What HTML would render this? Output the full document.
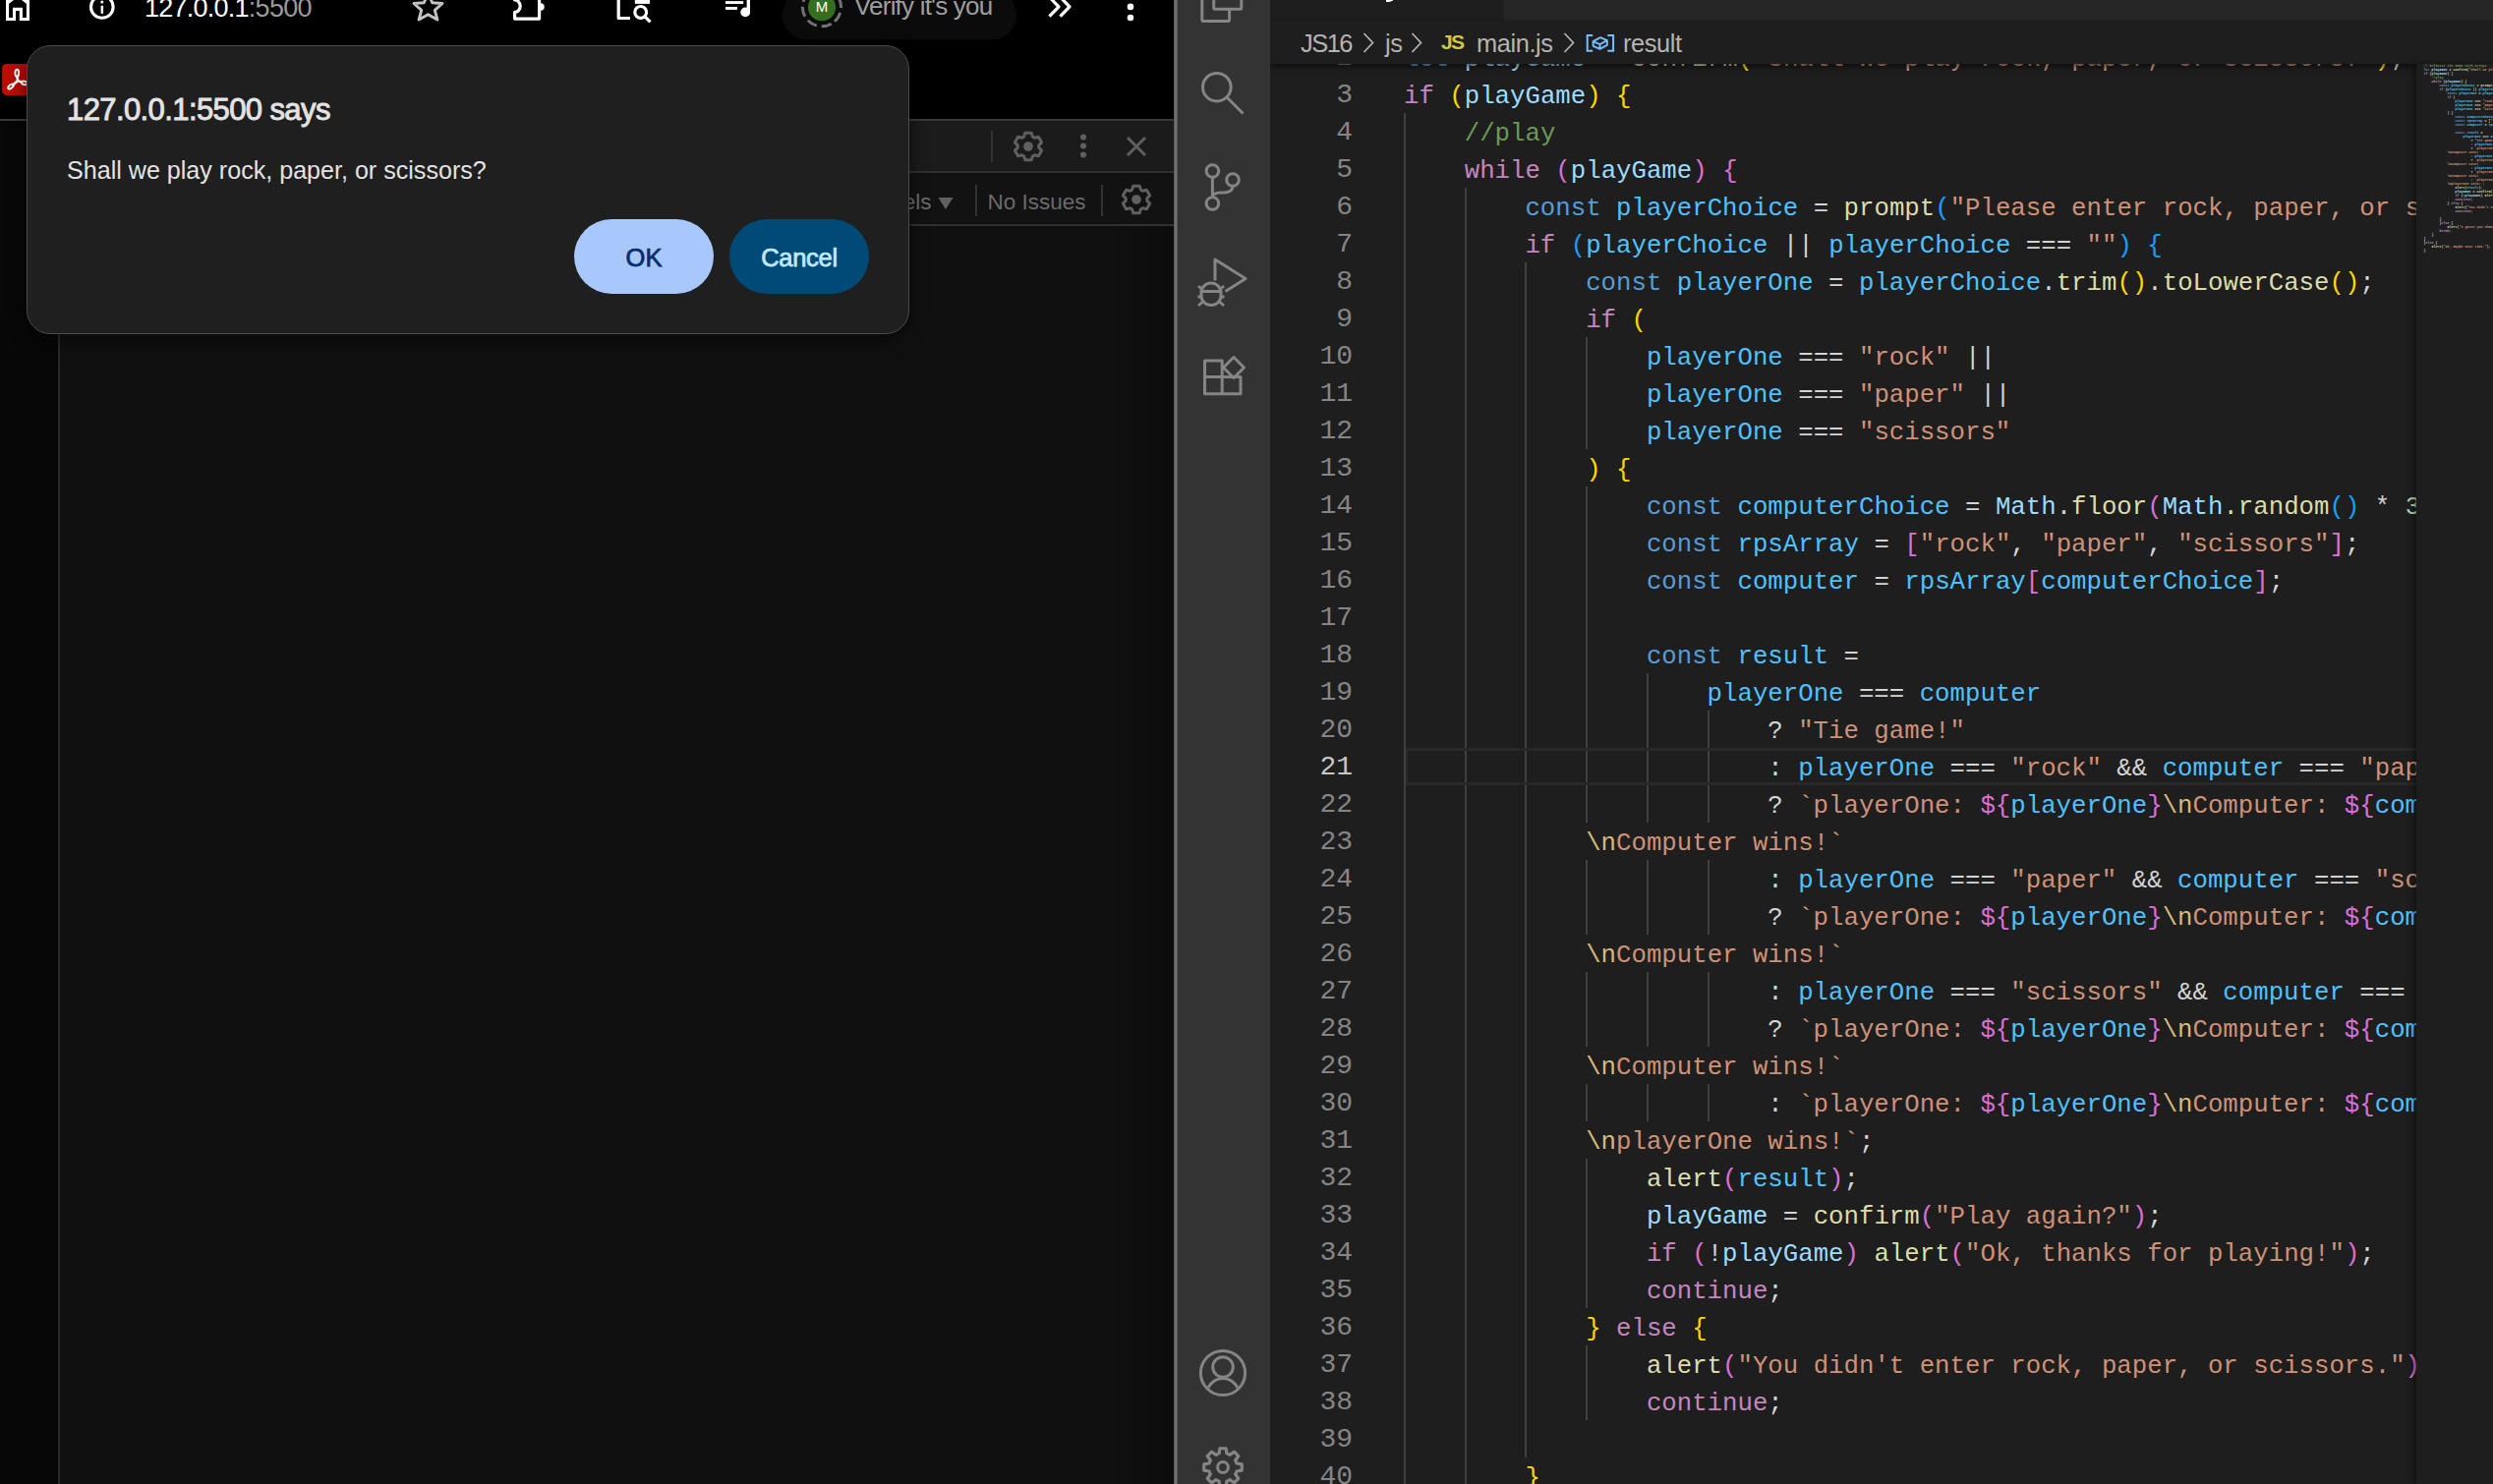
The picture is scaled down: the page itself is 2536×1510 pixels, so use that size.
<!DOCTYPE html>
<html><head><meta charset="utf-8">
<style>
*{margin:0;padding:0;box-sizing:border-box}
html,body{width:2536px;height:1510px;overflow:hidden;background:#000;font-family:"Liberation Sans",sans-serif}
.a{position:absolute}
/* browser */
#browser{position:absolute;left:0;top:0;width:1194px;height:1510px;background:#070707;overflow:hidden}
#toolbar{position:absolute;left:0;top:0;width:1194px;height:121px;background:#000}
#tbline{position:absolute;left:0;top:121px;width:1194px;height:2px;background:#3a3a3a}
#devtools{position:absolute;left:58.5px;top:123px;width:1135.5px;height:1387px;background:#101010;border-left:2px solid #2a2a2a}
#dt1{position:absolute;left:0;top:0;width:100%;height:53px;background:#1b1b1b;border-bottom:2px solid #303030}
#dt2{position:absolute;left:0;top:55px;width:100%;height:52px;background:#121212;border-bottom:2px solid #303030}
.sep{position:absolute;width:2px;background:#333}
#url{position:absolute;left:147px;top:-7px;font-size:27px;color:#fff;white-space:nowrap;letter-spacing:-0.75px}
#url span{color:#9a9a9a}
#pill{position:absolute;left:796px;top:-10px;width:238px;height:50px;border-radius:25px;background:#0c0c0c}
#verify{position:absolute;left:869px;top:-9px;font-size:26px;color:#9e9e9e;white-space:nowrap;letter-spacing:-0.8px}
/* dialog */
#dialog{position:absolute;left:27px;top:46px;width:898px;height:294px;background:#1f1f1f;border:1.5px solid #4a4a4a;border-radius:24px;box-shadow:0 6px 18px rgba(0,0,0,0.5)}
#dtitle{position:absolute;left:40px;top:47px;font-size:31px;font-weight:normal;color:#e3e3e3;white-space:nowrap;letter-spacing:-0.6px;-webkit-text-stroke:0.9px #e3e3e3}
#dbody{position:absolute;left:40px;top:112px;font-size:25.1px;color:#e3e3e3;white-space:nowrap}
.btn{position:absolute;top:176px;width:142px;height:76px;border-radius:38px;font-size:25.5px;font-weight:normal;text-align:center;line-height:79px;-webkit-text-stroke:0.75px currentColor}
#ok{left:556px;background:#a8c7fa;color:#062e6f}
#cancel{left:714px;background:#004a77;color:#c2e7ff;letter-spacing:-0.3px}
/* vscode */
#vborder{position:absolute;left:1194px;top:0;width:4px;height:1510px;background:linear-gradient(to right,#505050,#767676 45%,#6a6a6a 75%,#4a4a4a)}
#activity{position:absolute;left:1198px;top:0;width:94px;height:1510px;background:#333333}
#editor{position:absolute;left:1292px;top:0;width:1244px;height:1510px;background:#1e1e1e;overflow:hidden}
#tabs{position:absolute;left:0;top:0;width:1244px;height:21px;background:#262626}
#acttab{position:absolute;left:0;top:0;width:238px;height:21px;background:#1e1e1e}
#crumbs{position:absolute;left:0;top:21px;width:1244px;height:44px;background:#1e1e1e;z-index:5;box-shadow:0 3px 6px rgba(0,0,0,0.55)}
#crumbs .t{position:absolute;top:8.5px;font-size:25.4px;color:#b4b4b4;white-space:nowrap;letter-spacing:-0.4px}
#code{position:absolute;left:0;top:0;width:2458px;height:1510px;overflow:hidden}
.cl{position:absolute;white-space:pre;font-family:"Liberation Mono",monospace;font-size:25.72px;line-height:38px;height:38px}
.ln{position:absolute;left:1200px;width:176px;text-align:right;font-family:"Liberation Mono",monospace;font-size:28px;line-height:38px;color:#858585}
.ln.act{color:#c6c6c6}
.g{position:absolute;width:2px;background:#404040}
.cur{position:absolute;left:1430px;width:1028px;height:38px;border-top:3.5px solid #282828;border-bottom:3.5px solid #282828;border-left:2px solid #282828}
.kw{color:#c586c0}.st{color:#569cd6}.v{color:#9cdcfe}.c{color:#4fc1ff}.f{color:#dcdcaa}.s{color:#ce9178}
.e{color:#d7ba7d}.cm{color:#6a9955}.o{color:#d4d4d4}.n{color:#b5cea8}.b1{color:#ffd700}.b2{color:#da70d6}.b3{color:#179fff}
#mmwrap{position:absolute;z-index:6;left:2458px;top:65px;width:78px;height:1445px;background:#1e1e1e;box-shadow:-2px 0 6px rgba(0,0,0,0.5)}
.mml{position:absolute;white-space:pre;font-family:"Liberation Mono",monospace;font-size:3.34px;line-height:4px;font-weight:bold;transform:scaleY(1.25);transform-origin:0 2px}
</style></head><body>
<div id="browser">
  <div id="toolbar">
    <svg class="a" style="left:0;top:0" width="1194" height="50" viewBox="0 0 1194 50">
      <g fill="none" stroke="#fff" stroke-width="3.1" stroke-linejoin="miter">
        <path d="M7.55 -3 V19.55 H14.5 V9.35 H21.35 V19.55 H28.45 V-3"/>
        <path d="M7.55 3 L18 -5 L28.45 3"/>
        <circle cx="103.8" cy="7" r="11.3"/>
      </g>
      <rect x="102.6" y="5.8" width="2.5" height="8" fill="#fff"/>
      <circle cx="103.8" cy="1.9" r="1.5" fill="#fff"/>
      <path d="M435.5 -7.3 L439.7 2.8 L450 3.5 L442.3 10.3 L444.9 20 L435.5 14.8 L426.1 20 L428.7 10.3 L421 3.5 L431.3 2.8 Z" fill="none" stroke="#c4c4c4" stroke-width="2.9" stroke-linejoin="round"/>
      <g fill="none" stroke="#fff" stroke-width="3.2" stroke-linejoin="round">
        <path d="M523.6 -2 V0 A5.6 6.2 0 0 1 523.6 12.4 V19.1 H548.6 V-2"/>
        <path d="M629.2 -2 V18.5 H641"/>
        <circle cx="651.7" cy="12.4" r="5.9"/>
        <path d="M656 16.8 L661.5 22.3"/>
        <path d="M1067.5 -3 L1077 6.8 L1067.5 16.6 M1078.5 -3 L1088 6.8 L1078.5 16.6"/>
      </g>
      <path d="M550 3.3 A3.75 3.75 0 0 1 550 10.8 Z" fill="#fff"/>
      <rect x="645.8" y="-2" width="15.2" height="5.9" fill="#fff"/>
      <rect x="738" y="1.1" width="18.2" height="2.9" fill="#fff"/>
      <rect x="738" y="7" width="12" height="2.9" fill="#fff"/>
      <rect x="759.6" y="-2" width="3.4" height="14.4" fill="#fff"/>
      <circle cx="758.2" cy="12.4" r="4.9" fill="#fff"/>
      <rect x="796" y="-10" width="238" height="50.4" rx="25" fill="#0b0b0b"/>
      <circle cx="836" cy="7.2" r="19.6" fill="none" stroke="#727272" stroke-width="3" stroke-dasharray="10.5 4.9" transform="rotate(60 836 7.2)"/>
      <circle cx="836" cy="7.2" r="14.1" fill="#346e21"/>
      <text x="836" y="12.4" font-size="15" fill="#fff" text-anchor="middle" font-family="Liberation Sans">M</text>
      <circle cx="1150" cy="6.9" r="3.3" fill="#fff"/>
      <circle cx="1150" cy="18" r="3.3" fill="#fff"/>
    </svg>
    <div id="url">127.0.0.1<span>:5500</span></div>
    <div id="verify">Verify it's you</div>
    <!-- pdf -->
    <svg class="a" style="left:0;top:60px" width="40" height="42" viewBox="0 60 40 42">
      <defs><linearGradient id="pg" x1="0" x2="1" y1="0" y2="0"><stop offset="0" stop-color="#c00d00"/><stop offset="1" stop-color="#a80a00"/></linearGradient></defs>
      <rect x="2.2" y="64.9" width="40" height="32" rx="4.5" fill="url(#pg)"/>
      <g fill="none" stroke="#fff" stroke-width="1.9">
        <ellipse cx="17.3" cy="74.3" rx="1.9" ry="3.6"/>
        <ellipse cx="11" cy="88" rx="3.3" ry="1.7" transform="rotate(-40 11 88)"/>
        <ellipse cx="24.8" cy="84.4" rx="3" ry="1.7" transform="rotate(15 24.8 84.4)"/>
      </g>
      <path d="M17.4 77.5 L18 82.3 L13.3 86.3 M18 82.3 L22.2 83.6" fill="none" stroke="#fff" stroke-width="2.6" stroke-linecap="round"/>
    </svg>
  </div>
  <div id="tbline"></div>
  <div id="devtools">
    <div id="dt1">
      <div class="sep" style="left:947px;top:10px;height:32px"></div>
      <svg class="a" style="left:968px;top:9px" width="34" height="34" viewBox="0 0 34 34"><path d="M12.61 7.13 L13.81 3.16 L20.19 3.16 L21.39 7.13 L21.90 7.38 L22.40 7.65 L22.88 7.94 L23.35 8.26 L27.39 7.32 L30.58 12.85 L27.74 15.87 L27.79 16.43 L27.80 17.00 L27.79 17.57 L27.74 18.13 L30.58 21.15 L27.39 26.68 L23.35 25.74 L22.88 26.06 L22.40 26.35 L21.90 26.62 L21.39 26.87 L20.19 30.84 L13.81 30.84 L12.61 26.87 L12.10 26.62 L11.60 26.35 L11.12 26.06 L10.65 25.74 L6.61 26.68 L3.42 21.15 L6.26 18.13 L6.21 17.57 L6.20 17.00 L6.21 16.43 L6.26 15.87 L3.42 12.85 L6.61 7.32 L10.65 8.26 L11.12 7.94 L11.60 7.65 L12.10 7.38 Z" fill="none" stroke="#606060" stroke-width="3" stroke-linejoin="round"/><circle cx="17" cy="17" r="4.8" fill="#606060"/></svg>
      <svg class="a" style="left:1033px;top:11px" width="16" height="30" viewBox="0 0 16 30"><circle cx="8" cy="5.5" r="3" fill="#606060"/><circle cx="8" cy="14.5" r="3" fill="#606060"/><circle cx="8" cy="23.5" r="3" fill="#606060"/></svg>
      <svg class="a" style="left:1083px;top:14px" width="24" height="24" viewBox="0 0 24 24"><path d="M3 3 L21 21 M21 3 L3 21" stroke="#606060" stroke-width="3"/></svg>
    </div>
    <div id="dt2">
      <div class="a" style="left:822px;top:14.5px;font-size:22.5px;color:#6a6a6a;white-space:nowrap">Levels</div>
      <svg class="a" style="left:892px;top:22px" width="18" height="14" viewBox="0 0 18 14"><path d="M1.5 1 H16.5 L9 13 Z" fill="#606060"/></svg>
      <div class="sep" style="left:931px;top:10px;height:32px"></div>
      <div class="a" style="left:944px;top:14.5px;font-size:22.5px;color:#6a6a6a;white-space:nowrap">No Issues</div>
      <div class="sep" style="left:1059px;top:10px;height:32px"></div>
      <svg class="a" style="left:1078px;top:8px" width="34" height="34" viewBox="0 0 34 34"><path d="M12.61 7.13 L13.81 3.16 L20.19 3.16 L21.39 7.13 L21.90 7.38 L22.40 7.65 L22.88 7.94 L23.35 8.26 L27.39 7.32 L30.58 12.85 L27.74 15.87 L27.79 16.43 L27.80 17.00 L27.79 17.57 L27.74 18.13 L30.58 21.15 L27.39 26.68 L23.35 25.74 L22.88 26.06 L22.40 26.35 L21.90 26.62 L21.39 26.87 L20.19 30.84 L13.81 30.84 L12.61 26.87 L12.10 26.62 L11.60 26.35 L11.12 26.06 L10.65 25.74 L6.61 26.68 L3.42 21.15 L6.26 18.13 L6.21 17.57 L6.20 17.00 L6.21 16.43 L6.26 15.87 L3.42 12.85 L6.61 7.32 L10.65 8.26 L11.12 7.94 L11.60 7.65 L12.10 7.38 Z" fill="none" stroke="#606060" stroke-width="3" stroke-linejoin="round"/><circle cx="17" cy="17" r="4.8" fill="#606060"/></svg>
    </div>
  </div>
  <div class="a" style="left:1130px;top:231px;width:64px;height:1279px;background:linear-gradient(to right,rgba(0,0,0,0),rgba(0,0,0,0.28))"></div>
  <div id="dialog">
    <div id="dtitle">127.0.0.1:5500 says</div>
    <div id="dbody">Shall we play rock, paper, or scissors?</div>
    <div class="btn" id="ok">OK</div>
    <div class="btn" id="cancel">Cancel</div>
  </div>
</div>
<div id="vborder"></div>
<div id="activity">
  <svg class="a" style="left:0;top:0" width="94" height="1510" viewBox="0 0 94 1510">
    <g fill="none" stroke="#858585" stroke-width="3" stroke-linejoin="round">
      <!-- explorer -->
      <path d="M24.8 -20 V20 Q24.8 21.6 26.4 21.6 H51 Q52.6 21.6 52.6 20 V9.3"/>
      <path d="M36.7 -20 V7.7 Q36.7 9.3 38.3 9.3 H63.2 Q64.8 9.3 64.8 7.7 V-20"/>
      <!-- search -->
      <circle cx="39.8" cy="88.7" r="14.3"/>
      <path d="M50 99 L66.5 115.5"/>
      <!-- scm -->
      <circle cx="35.4" cy="174" r="6.3"/>
      <circle cx="35.4" cy="207" r="6.3"/>
      <circle cx="56" cy="183" r="6.3"/>
      <path d="M35.4 180.3 V200.7"/>
      <path d="M56 189.3 C56 194.5 52 196 46 196 H43 C38.5 196 35.4 198 35.4 201"/>
      <!-- debug -->
      <path d="M38 285.5 V264 L69 283.5 L48.5 296.5"/>
      <path d="M24 298 A10 10 0 0 1 44 298 V301 A10 9.5 0 0 1 24 301 Z"/>
      <path d="M24 296.5 H44 M20.5 302 H24 M44 302 H47.5 M21 291 L25.5 295 M47 291 L42.5 295 M21 311 L25.5 307 M47 311 L42.5 307"/>
      <!-- extensions -->
      <path d="M27.5 383.4 V367 H45.2 V400.8 H27.5 V383.4 H64 V400.8 H45.2"/>
      <path d="M57 363.5 L67.5 374 L57 384.5 L46.5 374 Z"/>
      <!-- account -->
      <circle cx="46" cy="1397" r="22.6"/>
      <circle cx="46" cy="1391" r="10.3"/>
      <path d="M31 1412 C34.5 1406 40 1402.5 46 1402.5 C52 1402.5 57.5 1406 61 1412"/>
      <!-- gear -->
      <circle cx="46" cy="1493" r="5.4"/>
      <path d="M42.00 1479.06 L42.95 1473.74 L49.05 1473.74 L50.00 1479.06 L50.78 1479.31 L51.55 1479.60 L52.30 1479.94 L53.03 1480.32 L57.46 1477.22 L61.78 1481.54 L58.68 1485.97 L59.06 1486.70 L59.40 1487.45 L59.69 1488.22 L59.94 1489.00 L65.26 1489.95 L65.26 1496.05 L59.94 1497.00 L59.69 1497.78 L59.40 1498.55 L59.06 1499.30 L58.68 1500.03 L61.78 1504.46 L57.46 1508.78 L53.03 1505.68 L52.30 1506.06 L51.55 1506.40 L50.78 1506.69 L50.00 1506.94 L49.05 1512.26 L42.95 1512.26 L42.00 1506.94 L41.22 1506.69 L40.45 1506.40 L39.70 1506.06 L38.97 1505.68 L34.54 1508.78 L30.22 1504.46 L33.32 1500.03 L32.94 1499.30 L32.60 1498.55 L32.31 1497.78 L32.06 1497.00 L26.74 1496.05 L26.74 1489.95 L32.06 1489.00 L32.31 1488.22 L32.60 1487.45 L32.94 1486.70 L33.32 1485.97 L30.22 1481.54 L34.54 1477.22 L38.97 1480.32 L39.70 1479.94 L40.45 1479.60 L41.22 1479.31 Z" stroke-width="3.2"/>
    </g>
  </svg>
</div>
<div id="editor">
  <div id="tabs"><div id="acttab"></div><div class="a" style="left:118px;top:-6px;width:8px;height:8.2px;border-bottom:2.3px solid #fff;border-right:2.3px solid #fff;border-bottom-right-radius:5px"></div></div>
  <div id="crumbs">
    <div class="t" style="left:31px;letter-spacing:-1.5px">JS16</div>
    <svg class="a" style="left:92px;top:10px" width="16" height="24" viewBox="0 0 16 24"><path d="M3.5 3 L12.5 12.5 L3.5 22" fill="none" stroke="#b4b4b4" stroke-width="1.7"/></svg>
    <div class="t" style="left:117px">js</div>
    <svg class="a" style="left:141px;top:10px" width="16" height="24" viewBox="0 0 16 24"><path d="M3.5 3 L12.5 12.5 L3.5 22" fill="none" stroke="#b4b4b4" stroke-width="1.7"/></svg>
    <div class="a" style="left:174px;top:9.5px;font-size:21px;font-weight:bold;color:#cbcb41;white-space:nowrap;letter-spacing:-1.8px">JS</div>
    <div class="t" style="left:210px">main.js</div>
    <svg class="a" style="left:296px;top:10px" width="16" height="24" viewBox="0 0 16 24"><path d="M3.5 3 L12.5 12.5 L3.5 22" fill="none" stroke="#b4b4b4" stroke-width="1.7"/></svg>
    <svg class="a" style="left:320px;top:9px" width="32" height="26" viewBox="0 0 32 26"><g fill="none" stroke="#75beff" stroke-width="2"><path d="M8.2 6.1 H2.7 V21.8 H8.2 M23.3 6.1 H29.1 V21.8 H23.3"/></g><g fill="none" stroke="#75beff" stroke-width="1.9" stroke-linejoin="round"><path d="M8.6 12.2 L16 8.1 L22.9 11.2 V15.8 L15.5 19.8 L8.6 16.8 Z M8.6 12.2 L15.5 15.2 L22.9 11.2 M15.5 15.2 V19.8"/></g></svg>
    <div class="t" style="left:359px">result</div>
  </div>
</div>
<div id="code">
<div class="g" style="left:1428.0px;top:115.0px;height:1444.0px"></div>
<div class="g" style="left:1489.7px;top:191.0px;height:1368.0px"></div>
<div class="g" style="left:1551.4px;top:267.0px;height:1216.0px"></div>
<div class="g" style="left:1613.2px;top:343.0px;height:114.0px"></div>
<div class="g" style="left:1613.2px;top:495.0px;height:342.0px"></div>
<div class="g" style="left:1613.2px;top:875.0px;height:76.0px"></div>
<div class="g" style="left:1613.2px;top:989.0px;height:76.0px"></div>
<div class="g" style="left:1613.2px;top:1103.0px;height:38.0px"></div>
<div class="g" style="left:1613.2px;top:1179.0px;height:152.0px"></div>
<div class="g" style="left:1613.2px;top:1369.0px;height:76.0px"></div>
<div class="g" style="left:1674.9px;top:685.0px;height:152.0px"></div>
<div class="g" style="left:1674.9px;top:875.0px;height:76.0px"></div>
<div class="g" style="left:1674.9px;top:989.0px;height:76.0px"></div>
<div class="g" style="left:1674.9px;top:1103.0px;height:38.0px"></div>
<div class="g" style="left:1736.6px;top:723.0px;height:114.0px"></div>
<div class="g" style="left:1736.6px;top:875.0px;height:76.0px"></div>
<div class="g" style="left:1736.6px;top:989.0px;height:76.0px"></div>
<div class="g" style="left:1736.6px;top:1103.0px;height:38.0px"></div>
<div class="cur" style="top:761.0px"></div>
<div class="ln" style="top:40.1px">2</div>
<div class="cl" style="top:42.4px;left:1428.00px"><span class="st">let</span><span class="o"> </span><span class="v">playGame</span><span class="o"> = </span><span class="f">confirm</span><span class="b1">(</span><span class="s">&quot;Shall we play rock, paper, or scissors?&quot;</span><span class="b1">)</span><span class="o">;</span></div>
<div class="ln" style="top:78.1px">3</div>
<div class="cl" style="top:80.3px;left:1428.00px"><span class="kw">if</span><span class="o"> </span><span class="b1">(</span><span class="v">playGame</span><span class="b1">)</span><span class="o"> </span><span class="b1">{</span></div>
<div class="ln" style="top:116.1px">4</div>
<div class="cl" style="top:118.3px;left:1489.72px"><span class="cm">//play</span></div>
<div class="ln" style="top:154.2px">5</div>
<div class="cl" style="top:156.3px;left:1489.72px"><span class="kw">while</span><span class="o"> </span><span class="b2">(</span><span class="v">playGame</span><span class="b2">)</span><span class="o"> </span><span class="b2">{</span></div>
<div class="ln" style="top:192.2px">6</div>
<div class="cl" style="top:194.3px;left:1551.44px"><span class="st">const</span><span class="o"> </span><span class="c">playerChoice</span><span class="o"> = </span><span class="f">prompt</span><span class="b3">(</span><span class="s">&quot;Please enter rock, paper, or scissors.&quot;</span><span class="b3">)</span><span class="o">;</span></div>
<div class="ln" style="top:230.2px">7</div>
<div class="cl" style="top:232.3px;left:1551.44px"><span class="kw">if</span><span class="o"> </span><span class="b3">(</span><span class="c">playerChoice</span><span class="o"> || </span><span class="c">playerChoice</span><span class="o"> === </span><span class="s">&quot;&quot;</span><span class="b3">)</span><span class="o"> </span><span class="b3">{</span></div>
<div class="ln" style="top:268.2px">8</div>
<div class="cl" style="top:270.4px;left:1613.16px"><span class="st">const</span><span class="o"> </span><span class="c">playerOne</span><span class="o"> = </span><span class="c">playerChoice</span><span class="o">.</span><span class="f">trim</span><span class="b1">()</span><span class="o">.</span><span class="f">toLowerCase</span><span class="b1">()</span><span class="o">;</span></div>
<div class="ln" style="top:306.2px">9</div>
<div class="cl" style="top:308.4px;left:1613.16px"><span class="kw">if</span><span class="o"> </span><span class="b1">(</span></div>
<div class="ln" style="top:344.2px">10</div>
<div class="cl" style="top:346.4px;left:1674.88px"><span class="c">playerOne</span><span class="o"> === </span><span class="s">&quot;rock&quot;</span><span class="o"> ||</span></div>
<div class="ln" style="top:382.2px">11</div>
<div class="cl" style="top:384.4px;left:1674.88px"><span class="c">playerOne</span><span class="o"> === </span><span class="s">&quot;paper&quot;</span><span class="o"> ||</span></div>
<div class="ln" style="top:420.2px">12</div>
<div class="cl" style="top:422.4px;left:1674.88px"><span class="c">playerOne</span><span class="o"> === </span><span class="s">&quot;scissors&quot;</span></div>
<div class="ln" style="top:458.2px">13</div>
<div class="cl" style="top:460.4px;left:1613.16px"><span class="b1">)</span><span class="o"> </span><span class="b1">{</span></div>
<div class="ln" style="top:496.2px">14</div>
<div class="cl" style="top:498.4px;left:1674.88px"><span class="st">const</span><span class="o"> </span><span class="c">computerChoice</span><span class="o"> = </span><span class="v">Math</span><span class="o">.</span><span class="f">floor</span><span class="b2">(</span><span class="v">Math</span><span class="o">.</span><span class="f">random</span><span class="b3">()</span><span class="o"> * </span><span class="n">3</span><span class="b2">)</span><span class="o">;</span></div>
<div class="ln" style="top:534.1px">15</div>
<div class="cl" style="top:536.4px;left:1674.88px"><span class="st">const</span><span class="o"> </span><span class="c">rpsArray</span><span class="o"> = </span><span class="b2">[</span><span class="s">&quot;rock&quot;</span><span class="o">, </span><span class="s">&quot;paper&quot;</span><span class="o">, </span><span class="s">&quot;scissors&quot;</span><span class="b2">]</span><span class="o">;</span></div>
<div class="ln" style="top:572.1px">16</div>
<div class="cl" style="top:574.4px;left:1674.88px"><span class="st">const</span><span class="o"> </span><span class="c">computer</span><span class="o"> = </span><span class="c">rpsArray</span><span class="b2">[</span><span class="c">computerChoice</span><span class="b2">]</span><span class="o">;</span></div>
<div class="ln" style="top:610.1px">17</div>
<div class="ln" style="top:648.1px">18</div>
<div class="cl" style="top:650.4px;left:1674.88px"><span class="st">const</span><span class="o"> </span><span class="c">result</span><span class="o"> =</span></div>
<div class="ln" style="top:686.1px">19</div>
<div class="cl" style="top:688.4px;left:1736.60px"><span class="c">playerOne</span><span class="o"> === </span><span class="c">computer</span></div>
<div class="ln" style="top:724.1px">20</div>
<div class="cl" style="top:726.4px;left:1798.32px"><span class="o">? </span><span class="s">&quot;Tie game!&quot;</span></div>
<div class="ln act" style="top:762.1px">21</div>
<div class="cl" style="top:764.4px;left:1798.32px"><span class="o">: </span><span class="c">playerOne</span><span class="o"> === </span><span class="s">&quot;rock&quot;</span><span class="o"> &amp;&amp; </span><span class="c">computer</span><span class="o"> === </span><span class="s">&quot;paper&quot;</span></div>
<div class="ln" style="top:800.1px">22</div>
<div class="cl" style="top:802.4px;left:1798.32px"><span class="o">? </span><span class="s">`playerOne: </span><span class="b2">${</span><span class="c">playerOne</span><span class="b2">}</span><span class="e">\n</span><span class="s">Computer: </span><span class="b2">${</span><span class="c">computer</span><span class="b2">}</span></div>
<div class="ln" style="top:838.1px">23</div>
<div class="cl" style="top:840.4px;left:1613.16px"><span class="e">\n</span><span class="s">Computer wins!`</span></div>
<div class="ln" style="top:876.1px">24</div>
<div class="cl" style="top:878.4px;left:1798.32px"><span class="o">: </span><span class="c">playerOne</span><span class="o"> === </span><span class="s">&quot;paper&quot;</span><span class="o"> &amp;&amp; </span><span class="c">computer</span><span class="o"> === </span><span class="s">&quot;scissors&quot;</span></div>
<div class="ln" style="top:914.1px">25</div>
<div class="cl" style="top:916.4px;left:1798.32px"><span class="o">? </span><span class="s">`playerOne: </span><span class="b2">${</span><span class="c">playerOne</span><span class="b2">}</span><span class="e">\n</span><span class="s">Computer: </span><span class="b2">${</span><span class="c">computer</span><span class="b2">}</span></div>
<div class="ln" style="top:952.1px">26</div>
<div class="cl" style="top:954.4px;left:1613.16px"><span class="e">\n</span><span class="s">Computer wins!`</span></div>
<div class="ln" style="top:990.1px">27</div>
<div class="cl" style="top:992.4px;left:1798.32px"><span class="o">: </span><span class="c">playerOne</span><span class="o"> === </span><span class="s">&quot;scissors&quot;</span><span class="o"> &amp;&amp; </span><span class="c">computer</span><span class="o"> === </span><span class="s">&quot;rock&quot;</span></div>
<div class="ln" style="top:1028.1px">28</div>
<div class="cl" style="top:1030.3px;left:1798.32px"><span class="o">? </span><span class="s">`playerOne: </span><span class="b2">${</span><span class="c">playerOne</span><span class="b2">}</span><span class="e">\n</span><span class="s">Computer: </span><span class="b2">${</span><span class="c">computer</span><span class="b2">}</span></div>
<div class="ln" style="top:1066.1px">29</div>
<div class="cl" style="top:1068.3px;left:1613.16px"><span class="e">\n</span><span class="s">Computer wins!`</span></div>
<div class="ln" style="top:1104.1px">30</div>
<div class="cl" style="top:1106.3px;left:1798.32px"><span class="o">: </span><span class="s">`playerOne: </span><span class="b2">${</span><span class="c">playerOne</span><span class="b2">}</span><span class="e">\n</span><span class="s">Computer: </span><span class="b2">${</span><span class="c">computer</span><span class="b2">}</span></div>
<div class="ln" style="top:1142.1px">31</div>
<div class="cl" style="top:1144.3px;left:1613.16px"><span class="e">\n</span><span class="s">playerOne wins!`</span><span class="o">;</span></div>
<div class="ln" style="top:1180.1px">32</div>
<div class="cl" style="top:1182.3px;left:1674.88px"><span class="f">alert</span><span class="b2">(</span><span class="c">result</span><span class="b2">)</span><span class="o">;</span></div>
<div class="ln" style="top:1218.1px">33</div>
<div class="cl" style="top:1220.3px;left:1674.88px"><span class="v">playGame</span><span class="o"> = </span><span class="f">confirm</span><span class="b2">(</span><span class="s">&quot;Play again?&quot;</span><span class="b2">)</span><span class="o">;</span></div>
<div class="ln" style="top:1256.1px">34</div>
<div class="cl" style="top:1258.3px;left:1674.88px"><span class="kw">if</span><span class="o"> </span><span class="b2">(</span><span class="o">!</span><span class="v">playGame</span><span class="b2">)</span><span class="o"> </span><span class="f">alert</span><span class="b2">(</span><span class="s">&quot;Ok, thanks for playing!&quot;</span><span class="b2">)</span><span class="o">;</span></div>
<div class="ln" style="top:1294.1px">35</div>
<div class="cl" style="top:1296.3px;left:1674.88px"><span class="kw">continue</span><span class="o">;</span></div>
<div class="ln" style="top:1332.1px">36</div>
<div class="cl" style="top:1334.3px;left:1613.16px"><span class="b1">}</span><span class="o"> </span><span class="kw">else</span><span class="o"> </span><span class="b1">{</span></div>
<div class="ln" style="top:1370.1px">37</div>
<div class="cl" style="top:1372.3px;left:1674.88px"><span class="f">alert</span><span class="b2">(</span><span class="s">&quot;You didn&#x27;t enter rock, paper, or scissors.&quot;</span><span class="b2">)</span><span class="o">;</span></div>
<div class="ln" style="top:1408.1px">38</div>
<div class="cl" style="top:1410.3px;left:1674.88px"><span class="kw">continue</span><span class="o">;</span></div>
<div class="ln" style="top:1446.1px">39</div>
<div class="ln" style="top:1484.1px">40</div>
<div class="cl" style="top:1486.3px;left:1551.44px"><span class="b1">}</span></div>
<div class="ln" style="top:1522.1px">41</div>
</div>
<div id="mmwrap"><div class="mml" style="top:-0.3px;left:7.5px"><span class="cm">// Refactor the Game with Arrays</span></div><div class="mml" style="top:3.7px;left:7.5px"><span class="st">let</span><span class="o"> </span><span class="v">playGame</span><span class="o"> = </span><span class="f">confirm</span><span class="o">(</span><span class="s">&quot;Shall we play rock, paper, or scissors?&quot;</span><span class="o">)</span><span class="o">;</span></div><div class="mml" style="top:7.7px;left:7.5px"><span class="kw">if</span><span class="o"> </span><span class="o">(</span><span class="v">playGame</span><span class="o">)</span><span class="o"> </span><span class="o">{</span></div><div class="mml" style="top:11.7px;left:15.5px"><span class="cm">//play</span></div><div class="mml" style="top:15.7px;left:15.5px"><span class="kw">while</span><span class="o"> </span><span class="o">(</span><span class="v">playGame</span><span class="o">)</span><span class="o"> </span><span class="o">{</span></div><div class="mml" style="top:19.7px;left:23.5px"><span class="st">const</span><span class="o"> </span><span class="c">playerChoice</span><span class="o"> = </span><span class="f">prompt</span><span class="o">(</span><span class="s">&quot;Please enter rock, paper, or scissors.&quot;</span><span class="o">)</span><span class="o">;</span></div><div class="mml" style="top:23.7px;left:23.5px"><span class="kw">if</span><span class="o"> </span><span class="o">(</span><span class="c">playerChoice</span><span class="o"> || </span><span class="c">playerChoice</span><span class="o"> === </span><span class="s">&quot;&quot;</span><span class="o">)</span><span class="o"> </span><span class="o">{</span></div><div class="mml" style="top:27.7px;left:31.5px"><span class="st">const</span><span class="o"> </span><span class="c">playerOne</span><span class="o"> = </span><span class="c">playerChoice</span><span class="o">.</span><span class="f">trim</span><span class="o">()</span><span class="o">.</span><span class="f">toLowerCase</span><span class="o">()</span><span class="o">;</span></div><div class="mml" style="top:31.7px;left:31.5px"><span class="kw">if</span><span class="o"> </span><span class="o">(</span></div><div class="mml" style="top:35.7px;left:39.5px"><span class="c">playerOne</span><span class="o"> === </span><span class="s">&quot;rock&quot;</span><span class="o"> ||</span></div><div class="mml" style="top:39.7px;left:39.5px"><span class="c">playerOne</span><span class="o"> === </span><span class="s">&quot;paper&quot;</span><span class="o"> ||</span></div><div class="mml" style="top:43.7px;left:39.5px"><span class="c">playerOne</span><span class="o"> === </span><span class="s">&quot;scissors&quot;</span></div><div class="mml" style="top:47.7px;left:31.5px"><span class="o">)</span><span class="o"> </span><span class="o">{</span></div><div class="mml" style="top:51.7px;left:39.5px"><span class="st">const</span><span class="o"> </span><span class="c">computerChoice</span><span class="o"> = </span><span class="v">Math</span><span class="o">.</span><span class="f">floor</span><span class="o">(</span><span class="v">Math</span><span class="o">.</span><span class="f">random</span><span class="o">()</span><span class="o"> * </span><span class="n">3</span><span class="o">)</span><span class="o">;</span></div><div class="mml" style="top:55.7px;left:39.5px"><span class="st">const</span><span class="o"> </span><span class="c">rpsArray</span><span class="o"> = </span><span class="o">[</span><span class="s">&quot;rock&quot;</span><span class="o">, </span><span class="s">&quot;paper&quot;</span><span class="o">, </span><span class="s">&quot;scissors&quot;</span><span class="o">]</span><span class="o">;</span></div><div class="mml" style="top:59.7px;left:39.5px"><span class="st">const</span><span class="o"> </span><span class="c">computer</span><span class="o"> = </span><span class="c">rpsArray</span><span class="o">[</span><span class="c">computerChoice</span><span class="o">]</span><span class="o">;</span></div><div class="mml" style="top:63.7px;left:7.5px"></div><div class="mml" style="top:67.7px;left:39.5px"><span class="st">const</span><span class="o"> </span><span class="c">result</span><span class="o"> =</span></div><div class="mml" style="top:71.7px;left:47.5px"><span class="c">playerOne</span><span class="o"> === </span><span class="c">computer</span></div><div class="mml" style="top:75.7px;left:55.5px"><span class="o">? </span><span class="s">&quot;Tie game!&quot;</span></div><div class="mml" style="top:79.7px;left:55.5px"><span class="o">: </span><span class="c">playerOne</span><span class="o"> === </span><span class="s">&quot;rock&quot;</span><span class="o"> &amp;&amp; </span><span class="c">computer</span><span class="o"> === </span><span class="s">&quot;paper&quot;</span></div><div class="mml" style="top:83.7px;left:55.5px"><span class="o">? </span><span class="s">`playerOne: </span><span class="o">${</span><span class="c">playerOne</span><span class="o">}</span><span class="e">\n</span><span class="s">Computer: </span><span class="o">${</span><span class="c">computer</span><span class="o">}</span></div><div class="mml" style="top:87.7px;left:31.5px"><span class="e">\n</span><span class="s">Computer wins!`</span></div><div class="mml" style="top:91.7px;left:55.5px"><span class="o">: </span><span class="c">playerOne</span><span class="o"> === </span><span class="s">&quot;paper&quot;</span><span class="o"> &amp;&amp; </span><span class="c">computer</span><span class="o"> === </span><span class="s">&quot;scissors&quot;</span></div><div class="mml" style="top:95.7px;left:55.5px"><span class="o">? </span><span class="s">`playerOne: </span><span class="o">${</span><span class="c">playerOne</span><span class="o">}</span><span class="e">\n</span><span class="s">Computer: </span><span class="o">${</span><span class="c">computer</span><span class="o">}</span></div><div class="mml" style="top:99.7px;left:31.5px"><span class="e">\n</span><span class="s">Computer wins!`</span></div><div class="mml" style="top:103.7px;left:55.5px"><span class="o">: </span><span class="c">playerOne</span><span class="o"> === </span><span class="s">&quot;scissors&quot;</span><span class="o"> &amp;&amp; </span><span class="c">computer</span><span class="o"> === </span><span class="s">&quot;rock&quot;</span></div><div class="mml" style="top:107.7px;left:55.5px"><span class="o">? </span><span class="s">`playerOne: </span><span class="o">${</span><span class="c">playerOne</span><span class="o">}</span><span class="e">\n</span><span class="s">Computer: </span><span class="o">${</span><span class="c">computer</span><span class="o">}</span></div><div class="mml" style="top:111.7px;left:31.5px"><span class="e">\n</span><span class="s">Computer wins!`</span></div><div class="mml" style="top:115.7px;left:55.5px"><span class="o">: </span><span class="s">`playerOne: </span><span class="o">${</span><span class="c">playerOne</span><span class="o">}</span><span class="e">\n</span><span class="s">Computer: </span><span class="o">${</span><span class="c">computer</span><span class="o">}</span></div><div class="mml" style="top:119.7px;left:31.5px"><span class="e">\n</span><span class="s">playerOne wins!`</span><span class="o">;</span></div><div class="mml" style="top:123.7px;left:39.5px"><span class="f">alert</span><span class="o">(</span><span class="c">result</span><span class="o">)</span><span class="o">;</span></div><div class="mml" style="top:127.7px;left:39.5px"><span class="v">playGame</span><span class="o"> = </span><span class="f">confirm</span><span class="o">(</span><span class="s">&quot;Play again?&quot;</span><span class="o">)</span><span class="o">;</span></div><div class="mml" style="top:131.7px;left:39.5px"><span class="kw">if</span><span class="o"> </span><span class="o">(</span><span class="o">!</span><span class="v">playGame</span><span class="o">)</span><span class="o"> </span><span class="f">alert</span><span class="o">(</span><span class="s">&quot;Ok, thanks for playing!&quot;</span><span class="o">)</span><span class="o">;</span></div><div class="mml" style="top:135.7px;left:39.5px"><span class="kw">continue</span><span class="o">;</span></div><div class="mml" style="top:139.7px;left:31.5px"><span class="o">}</span><span class="o"> </span><span class="kw">else</span><span class="o"> </span><span class="o">{</span></div><div class="mml" style="top:143.7px;left:39.5px"><span class="f">alert</span><span class="o">(</span><span class="s">&quot;You didn&#x27;t enter rock, paper, or scissors.&quot;</span><span class="o">)</span><span class="o">;</span></div><div class="mml" style="top:147.7px;left:39.5px"><span class="kw">continue</span><span class="o">;</span></div><div class="mml" style="top:151.7px;left:7.5px"></div><div class="mml" style="top:155.7px;left:23.5px"><span class="o">}</span></div><div class="mml" style="top:159.7px;left:23.5px"><span class="o">}</span><span class="kw">else</span><span class="o"> </span><span class="o">{</span></div><div class="mml" style="top:163.7px;left:31.5px"><span class="f">alert</span><span class="o">(</span><span class="s">&quot;I guess you changed your mind.&quot;</span><span class="o">);</span></div><div class="mml" style="top:167.7px;left:23.5px"><span class="kw">break</span><span class="o">;</span></div><div class="mml" style="top:171.7px;left:15.5px"><span class="o">}</span></div><div class="mml" style="top:175.7px;left:7.5px"><span class="o">}</span></div><div class="mml" style="top:179.7px;left:7.5px"><span class="o">}</span><span class="kw">else</span><span class="o"> </span><span class="o">{</span></div><div class="mml" style="top:183.7px;left:15.5px"><span class="f">alert</span><span class="o">(</span><span class="s">&quot;Ok, maybe next time.&quot;</span><span class="o">);</span></div><div class="mml" style="top:187.7px;left:7.5px"><span class="o">}</span></div></div>
</body></html>
